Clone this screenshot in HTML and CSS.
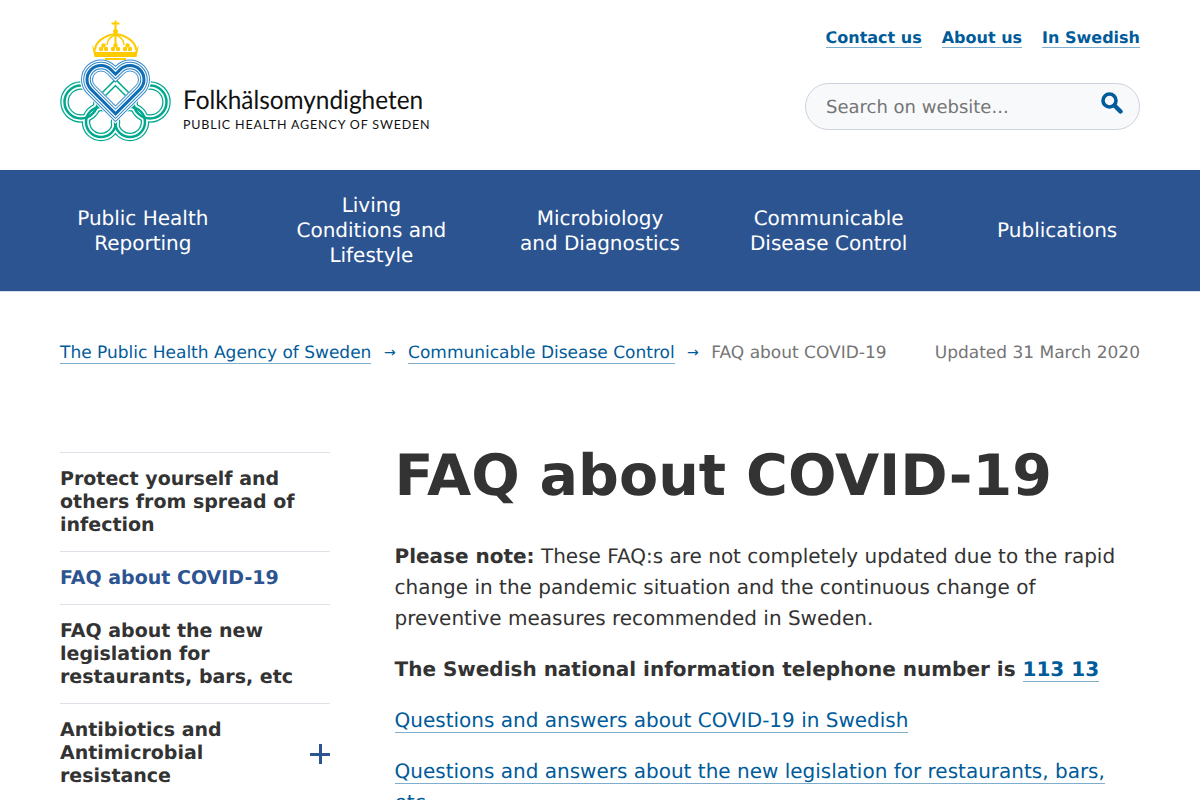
FILE: index.html
```html
<!DOCTYPE html>
<html lang="en">
<head>
<meta charset="utf-8">
<title>FAQ about COVID-19</title>
<link rel="stylesheet" href="styles.css">
</head>
<body>
<header class="site-header">
  <a class="logo" href="#">
    <svg class="logo-mark" viewBox="60 20 112 122" width="112" height="122" aria-hidden="true">
      <defs>
        <g id="knot">
          <circle cx="81" cy="102" r="16.5"/><circle cx="150" cy="102" r="16.5"/>
          <circle cx="101" cy="122" r="15"/><circle cx="130" cy="122" r="15"/>
        </g>
        <path id="heart" d="M115.5 113.8 91.1 89.400A14 14 0 0 1 110.900 69.600L115.500 74.200 120.100 69.600A14 14 0 0 1 139.900 89.400Z"/>
      </defs>
      <g fill="none">
        <use href="#knot" stroke="#00a88f" stroke-width="8.500"/>
        <use href="#knot" stroke="#fff" stroke-width="6"/>
        <use href="#knot" stroke="#00a88f" stroke-width="2.500"/>
        <use href="#heart" fill="#fff" stroke="#fff" stroke-width="14"/>
        <path d="M104 94 115.500 82.500 127 94" stroke="#00a88f" stroke-width="6"/>
        <path d="M104 94 115.500 82.500 127 94" stroke="#fff" stroke-width="3"/>
        <use href="#heart" stroke="#3b8ccc" stroke-width="12"/>
        <use href="#heart" stroke="#fff" stroke-width="10"/>
        <use href="#heart" stroke="#2b86c8" stroke-width="7.500"/>
        <use href="#heart" stroke="#fff" stroke-width="5.500"/>
        <use href="#heart" stroke="#0f6db5" stroke-width="3"/>
        <g stroke="#fdcb00">
          <path d="M95 50C95 42 105 35 115.500 34 126 35 136 42 136 50" stroke-width="2"/>
          <path d="M107 45C107 40 111 36 115.500 35 120 36 124 40 124 45" stroke-width="1.500"/>
          <path d="M115.500 29V45" stroke-width="2"/>
        </g>
      </g>
      <g fill="#fdcb00">
        <path d="M114.500 20.500h2v2h3v2h-3V29h-2v-4.500h-3v-2h3z"/>
        <circle cx="115.500" cy="31.500" r="2.500"/>
        <circle cx="115.500" cy="45.500" r="2.200"/><circle cx="113" cy="49" r="2.200"/><circle cx="118" cy="49" r="2.200"/>
        <circle cx="103.500" cy="45.500" r="2.200"/><circle cx="101" cy="49" r="2.200"/><circle cx="106" cy="49" r="2.200"/>
        <circle cx="127.500" cy="45.500" r="2.200"/><circle cx="125" cy="49" r="2.200"/><circle cx="130" cy="49" r="2.200"/>
        <path d="M92 45 96 52H135L139 45 136.500 57H94.500Z"/>
        <rect x="105" y="58" width="21" height="2"/>
      </g>
    </svg>
    <span class="logo-text">
      <span class="logo-name">Folkhälsomyndigheten</span>
      <span class="logo-sub">PUBLIC HEALTH AGENCY OF SWEDEN</span>
    </span>
  </a>
  <div class="header-tools">
    <nav class="top-links">
      <a href="#">Contact us</a>
      <a href="#">About us</a>
      <a href="#">In Swedish</a>
    </nav>
    <form class="search">
      <span class="search-placeholder">Search on website...</span>
      <svg class="search-icon" viewBox="0 0 22 22" width="22" height="22" aria-hidden="true">
        <circle cx="8.500" cy="8.500" r="6.500" fill="none" stroke="#005b9a" stroke-width="3.600"/>
        <path d="M14 14l5.500 5.500" stroke="#005b9a" stroke-width="4.400" stroke-linecap="round"/>
      </svg>
    </form>
  </div>
</header>
<nav class="main-nav">
  <a href="#">Public Health<br>Reporting</a>
  <a href="#">Living<br>Conditions and<br>Lifestyle</a>
  <a href="#">Microbiology<br>and Diagnostics</a>
  <a href="#">Communicable<br>Disease Control</a>
  <a href="#">Publications</a>
</nav>
<div class="crumb-bar">
  <div class="crumbs">
    <a href="#">The Public Health Agency of Sweden</a>
    <span class="arrow">→</span>
    <a href="#">Communicable Disease Control</a>
    <span class="arrow">→</span>
    <span>FAQ about COVID-19</span>
  </div>
  <div class="updated">Updated 31 March 2020</div>
</div>
<div class="page">
  <aside class="side-nav">
    <a class="side-item" href="#">Protect yourself and others from spread of infection</a>
    <a class="side-item current" href="#">FAQ about COVID-19</a>
    <a class="side-item" href="#">FAQ about the new legislation for restaurants, bars, etc</a>
    <a class="side-item expandable" href="#"><span>Antibiotics and Antimicrobial resistance</span><span class="plus"></span></a>
  </aside>
  <main class="content">
    <h1>FAQ about COVID-19</h1>
    <p><strong>Please note:</strong> These FAQ:s are not completely updated due to the rapid change in the pandemic situation and the continuous change of preventive measures recommended in Sweden.</p>
    <p><strong>The Swedish national information telephone number is <a href="#">113 13</a></strong></p>
    <p><a href="#">Questions and answers about COVID-19 in Swedish</a></p>
    <p><a href="#">Questions and answers about the new legislation for restaurants, bars, etc</a></p>
  </main>
</div>
</body>
</html>
```
FILE: styles.css
```css
* { box-sizing: border-box; }
html, body { height: 800px; overflow: hidden; }
body { margin: 0; font-family: "DejaVu Sans", sans-serif; color: #333; background: #fff; text-rendering: geometricPrecision; }
a { color: #005b9a; text-decoration: none; border-bottom: 1px solid #7fadcc; }

.site-header { height: 170px; padding: 20px 60px 0; display: flex; justify-content: space-between; align-items: flex-start; }
.logo { display: flex; border: 0; color: #111; }
.logo-mark { display: block; }
.logo-text { display: flex; flex-direction: column; align-items: flex-start; margin: 65px 0 0 11px; font-family: "Lato", sans-serif; white-space: nowrap; }
.logo-name { font-size: 26px; line-height: 28px; transform: scaleX(0.9375); transform-origin: left center; }
.logo-sub { font-size: 12.500px; line-height: 18px; margin-top: 3px; letter-spacing: 0.830px; }

.header-tools { display: flex; flex-direction: column; align-items: flex-end; }
.top-links { display: flex; gap: 20px; margin-top: 8px; font-size: 16px; font-weight: 700; line-height: 19px; }
.search { width: 335px; height: 47px; margin-top: 35px; padding: 0 15px 0 20px; display: flex; align-items: center; justify-content: space-between; background: #f8f9fb; border: 1px solid #ccd2dc; border-radius: 24px; }
.search-placeholder { margin-top: 2px; font-size: 18px; color: #757575; }
.search-icon { margin: -8px 1px 0 0; }

.main-nav { height: 122px; padding: 0 28.500px; background: #2c5491; display: grid; grid-template-columns: repeat(5, 1fr); align-items: center; border-bottom: 1px solid #d6dbe4; }
.main-nav a { color: #fff; border: 0; font-size: 20px; line-height: 25px; text-align: center; }

.crumb-bar { padding: 51px 60px 0; display: flex; justify-content: space-between; font-size: 17px; line-height: 20px; color: #757575; }
.crumbs { display: flex; }
.crumbs a { display: block; }
.arrow { color: #005b9a; width: 36.700px; text-align: center; font-size: 14px; }

.page { display: flex; padding: 88px 60px 0; }
.side-nav { width: 270px; margin-right: 64.500px; flex: none; display: flex; flex-direction: column; }
.side-item { padding: 15px 0 14px; border: 0; border-top: 1px solid #e0e0e8; color: #333; font-size: 19px; font-weight: 700; line-height: 23px; }
.side-item.current { color: #2c5491; }
.expandable { display: flex; align-items: center; justify-content: space-between; }
.expandable span:first-child { width: 200px; }
.plus { position: relative; width: 20px; height: 20px; margin-top: 1px; flex: none; }
.plus::before, .plus::after { content: ""; position: absolute; background: #2c5491; }
.plus::before { left: 0; right: 0; top: 8.500px; height: 3px; }
.plus::after { top: 0; bottom: 0; left: 8.500px; width: 3px; }

.content { flex: 1; min-width: 0; }
h1 { margin: -12px 0 29px; font-size: 57.100px; line-height: 72px; font-weight: 700; }
p { margin: 0 0 20px; font-size: 20px; line-height: 31px; }
```
